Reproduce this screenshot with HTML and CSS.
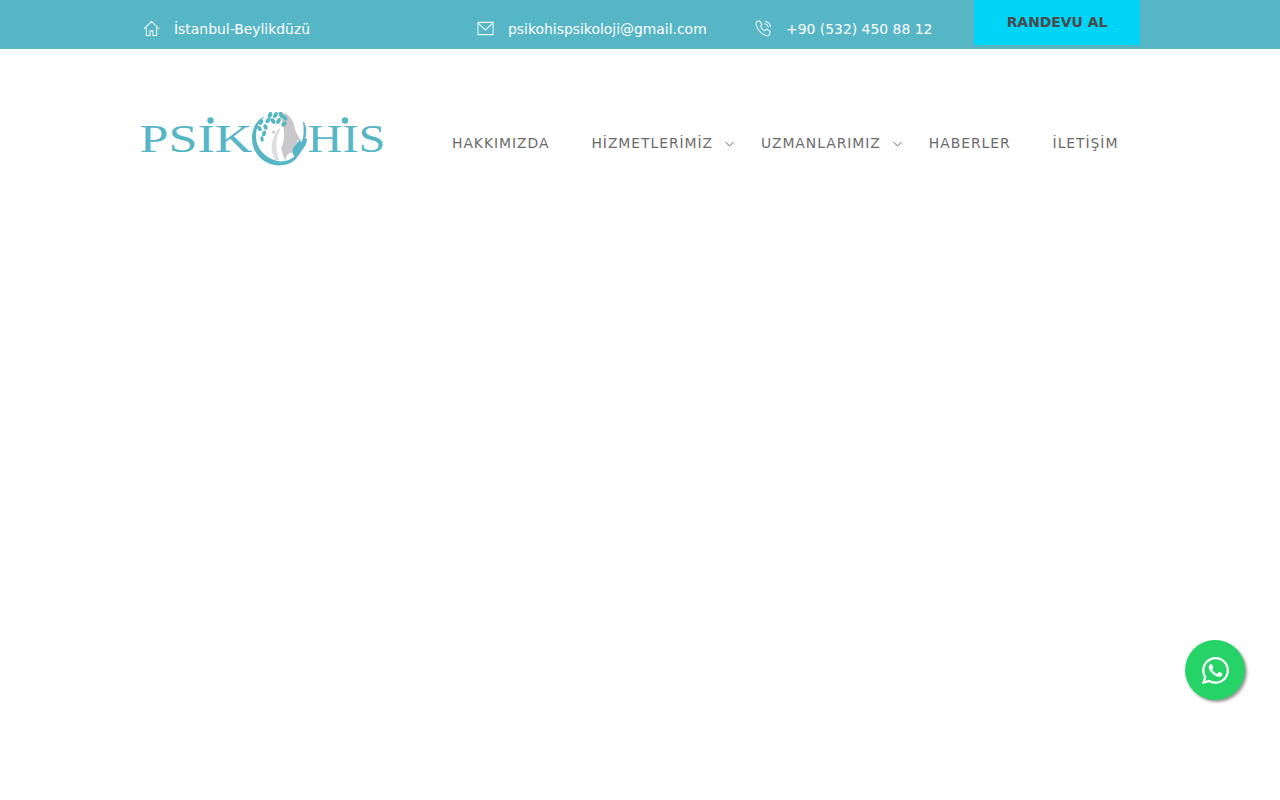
FILE: index.html
```html
<!DOCTYPE html>
<html lang="tr">
<head>
	<meta charset="utf-8">
	<title>Psikohis Psikoloji</title>
	<link rel="stylesheet" href="styles.css">
</head>
<body>
	<div class="top_bar">
		<div class="container top_row">
			<div class="top_item">
				<svg class="top_icon" viewBox="0 0 18 18"><path d="M1 9.500 9 1.500l8 8M3.500 8v8.500h4v-5h3v5h4V8"/></svg>
				<span>İstanbul-Beylikdüzü</span>
			</div>
			<div class="top_item">
				<svg class="top_icon" viewBox="0 0 18 18"><path d="M1 2.500h16v13H1zM1 3l8 7.500L17 3"/></svg>
				<span>psikohispsikoloji@gmail.com</span>
			</div>
			<div class="top_item">
				<svg class="top_icon" viewBox="0 0 18 18"><path d="M2 1.500 5 1l2.300 4-1.600 1.700c.8 2 2.600 3.800 4.600 4.600L12 9.700l4 2.300-.5 3c-.3 1.400-1.500 2-2.800 1.700C7.500 15.500 2.500 10.500 1.200 4.800 1 3.200 1 2 2 1.500zM10 4c2 .2 3.800 2 4 4M10.500 1.500c3.200.3 5.700 2.800 6 6"/></svg>
				<span>+90 (532) 450 88 12</span>
			</div>
			<a class="randevu_btn" href="#">RANDEVU AL</a>
		</div>
	</div>

	<div class="container main_row">
		<a class="logo" href="#">
			<svg viewBox="140 105 245 65" width="245" height="65">
				<text class="logo_text" x="139.500" y="152" textLength="113" lengthAdjust="spacingAndGlyphs">PSIK</text>
				<text class="logo_text" x="307.500" y="152" textLength="78" lengthAdjust="spacingAndGlyphs">HIS</text>
				<circle class="teal" cx="210.500" cy="120.500" r="3.200"/>
				<circle class="teal" cx="345" cy="120.500" r="3.200"/>
				<rect class="white" x="253" y="112" width="52" height="46"/>
				<!-- ring -->
				<path class="teal" d="M263 117C252 123 249 139 255 151c6 11 18 16 29 14 6-1 11-4 14-9l-2-1c-6 6-14 8-22 5-11-4-18-13-18-24 0-8 3-14 8-19z"/>
				<path class="teal" d="M304 122c3 6 3 13 0 19l-2 1c2-7 2-13 1-20z"/>
				<!-- face -->
				<path class="grey" d="M279 112c9 0 15 8 16 17 1 4 4 8 5 10l-3 2c1 2 0 3-1 4 1 2 0 3-1 4 0 3-2 4-5 4-2 0-4 3-5 9-1-6-3-10-4-13 3-7 4-15 2-23-1-6-2-10-4-14z"/>
				<path class="grey_light" d="M275 160c-5-9-5-21 4-32l1 2c-5 9-4 20-1 30z"/>
				<!-- hand -->
				<path class="teal" d="M295 157c-3-3-3-7-1-10 1-2 4-4 6-8l1 3 5-4 1 1c0 4-2 8-5 11-2 4-4 7-7 7z"/>
				<!-- leaves -->
				<g class="teal">
					<ellipse cx="270" cy="115" rx="2" ry="3.200" transform="rotate(20 270 115)"/>
					<ellipse cx="275.500" cy="115" rx="2" ry="3.200" transform="rotate(30 275.500 115)"/>
					<ellipse cx="281" cy="115" rx="2" ry="3.200" transform="rotate(-20 281 115)"/>
					<ellipse cx="285" cy="118" rx="1.900" ry="3" transform="rotate(-30 285 118)"/>
					<ellipse cx="268" cy="120.500" rx="2" ry="3" transform="rotate(40 268 120.500)"/>
					<ellipse cx="273" cy="121" rx="2" ry="3.200" transform="rotate(-30 273 121)"/>
					<ellipse cx="278.500" cy="121" rx="2" ry="3.200" transform="rotate(25 278.500 121)"/>
					<ellipse cx="284" cy="124" rx="2" ry="3" transform="rotate(50 284 124)"/>
					<ellipse cx="261" cy="122" rx="2" ry="3" transform="rotate(20 261 122)"/>
					<ellipse cx="265.500" cy="127" rx="1.900" ry="3" transform="rotate(-20 265.500 127)"/>
					<ellipse cx="259.500" cy="128.500" rx="1.900" ry="3" transform="rotate(-30 259.500 128.500)"/>
					<ellipse cx="264" cy="133.500" rx="1.900" ry="3" transform="rotate(20 264 133.500)"/>
					<ellipse cx="262" cy="139" rx="1.700" ry="2.800" transform="rotate(-10 262 139)"/>
				</g>
				<circle class="grey" cx="273.500" cy="132" r="1.500"/>
			</svg>
		</a>
		<nav class="main_nav">
			<a href="#">HAKKIMIZDA</a>
			<a class="has_sub" href="#">HİZMETLERİMİZ<svg class="chevron" viewBox="0 0 9 6"><path d="M.5 1 4.500 5l4-4"/></svg></a>
			<a class="has_sub" href="#">UZMANLARIMIZ<svg class="chevron" viewBox="0 0 9 6"><path d="M.5 1 4.500 5l4-4"/></svg></a>
			<a href="#">HABERLER</a>
			<a href="#">İLETİŞİM</a>
		</nav>
	</div>

	<a class="whatsapp_btn" href="#">
		<svg viewBox="0 0 24 24" width="27" height="27"><path d="M17.472 14.382c-.297-.149-1.758-.867-2.03-.967-.273-.099-.471-.148-.67.15-.197.297-.767.966-.94 1.164-.173.199-.347.223-.644.075-.297-.15-1.255-.463-2.39-1.475-.883-.788-1.48-1.761-1.653-2.059-.173-.297-.018-.458.13-.606.134-.133.298-.347.446-.52.149-.174.198-.298.298-.497.099-.198.05-.371-.025-.52-.075-.149-.669-1.612-.916-2.207-.242-.579-.487-.5-.669-.51-.173-.008-.371-.01-.57-.01-.198 0-.52.074-.792.372-.272.297-1.04 1.016-1.04 2.479 0 1.462 1.065 2.875 1.213 3.074.149.198 2.096 3.2 5.077 4.487.709.306 1.262.489 1.694.625.712.227 1.36.195 1.871.118.571-.085 1.758-.719 2.006-1.413.248-.694.248-1.289.173-1.413-.074-.124-.272-.198-.57-.347m-5.421 7.403h-.004a9.87 9.87 0 01-5.031-1.378l-.361-.214-3.741.982.998-3.648-.235-.374a9.86 9.86 0 01-1.51-5.26c.001-5.45 4.436-9.884 9.888-9.884 2.64 0 5.122 1.03 6.988 2.898a9.825 9.825 0 012.893 6.994c-.003 5.45-4.437 9.884-9.885 9.884m8.413-18.297A11.815 11.815 0 0012.05 0C5.495 0 .16 5.335.157 11.892c0 2.096.547 4.142 1.588 5.945L.057 24l6.305-1.654a11.882 11.882 0 005.683 1.448h.005c6.554 0 11.89-5.335 11.893-11.893a11.821 11.821 0 00-3.48-8.413z"/></svg>
	</a>
</body>
</html>
```

FILE: styles.css
```css
body {
	margin: 0;
	background-color: #FFFFFF;
	font-family: "DejaVu Sans", sans-serif;
	font-size: 14px;
}

a {
	text-decoration: none;
}

.container {
	width: 1000px;
	margin: 0 auto;
}

.top_bar {
	height: 49px;
	background: #56B6C6;
}

.top_row {
	display: grid;
	grid-template-columns: 334px 278px 222px 166px;
	height: 49px;
}

.top_item {
	display: flex;
	align-items: center;
	gap: 14px;
	padding: 9px 0 0 3px;
	color: #FFFFFF;
	font-size: 13.92px;
}

.top_icon {
	width: 17px;
	height: 17px;
	margin-top: -2px;
	fill: none;
	stroke: #FFFFFF;
	stroke-width: 1.1;
	opacity: 0.9;
}

.randevu_btn {
	height: 45px;
	line-height: 45px;
	background: #00D4F7;
	color: #4A4A4A;
	font-weight: bold;
	font-size: 13.92px;
	text-align: center;
}

.main_row {
	display: flex;
	align-items: flex-start;
	padding-top: 56px;
}

.logo {
	display: block;
	width: 245px;
	height: 65px;
}

.logo_text {
	font-family: "Liberation Serif", serif;
	font-size: 39px;
	fill: #56B6C6;
}

.teal {
	fill: #56B6C6;
}

.white {
	fill: #FFFFFF;
}

.grey {
	fill: #C9C7CC;
}

.grey_light {
	fill: #DEDDE0;
}

.main_nav {
	display: flex;
	margin-left: 46px;
	padding-top: 29px;
}

.main_nav a {
	position: relative;
	padding: 0 21px;
	color: #6B6B6B;
	font-size: 13.92px;
	letter-spacing: 0.95px;
	line-height: 18px;
}

.main_nav a.has_sub {
	padding-right: 27px;
}

.chevron {
	position: absolute;
	right: 6px;
	top: 7px;
	width: 9px;
	height: 6px;
	fill: none;
	stroke: #666666;
	stroke-width: 1;
}

.whatsapp_btn {
	position: fixed;
	right: 35px;
	bottom: 100px;
	display: flex;
	align-items: center;
	justify-content: center;
	width: 60px;
	height: 60px;
	border-radius: 50%;
	background: #25D366;
	box-shadow: 2px 2px 3px #999999;
	fill: #FFFFFF;
}
```
